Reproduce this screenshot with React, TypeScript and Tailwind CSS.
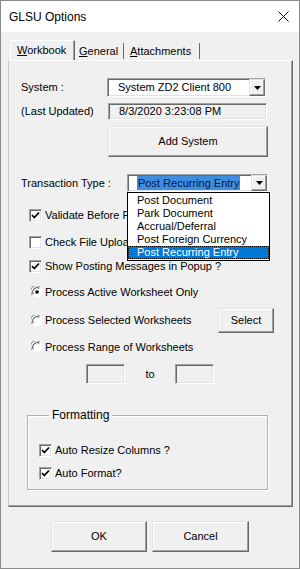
import { ReactNode } from "react";

const font = { fontFamily: '"Liberation Sans", Arial, sans-serif' };

const sunken =
  "border border-t-[#a0a0a0] border-l-[#a0a0a0] border-b-white border-r-white shadow-[inset_1px_1px_0_#696969,inset_-1px_-1px_0_#e3e3e3]";
const raised =
  "border border-t-[#e3e3e3] border-l-[#e3e3e3] border-b-[#696969] border-r-[#696969] shadow-[inset_-1px_-1px_0_#a0a0a0,inset_1px_1px_0_#ffffff]";

function Check({ checked }: { checked?: boolean }) {
  return (
    <span className={`w-[13px] h-[13px] bg-white flex items-center justify-center shrink-0 ${sunken}`}>
      {checked && (
        <svg width="9" height="9" viewBox="0 0 9 9">
          <path d="M1 4 L3.3 6.5 L8 1.5" fill="none" stroke="#000" strokeWidth="1.8" />
        </svg>
      )}
    </span>
  );
}

function Radio({ on }: { on?: boolean }) {
  return (
    <svg width="12" height="12" viewBox="0 0 12 12" className="shrink-0">
      <circle cx="6" cy="6" r="5.5" fill="#ffffff" />
      <path d="M1.2 9 A5.5 5.5 0 0 1 9 1.2" fill="none" stroke="#808080" strokeWidth="1" />
      <path d="M2.2 8.2 A4.4 4.4 0 0 1 8.2 2.2" fill="none" stroke="#404040" strokeWidth="1" />
      <path d="M10.8 3 A5.5 5.5 0 0 1 3 10.8" fill="none" stroke="#f0f0f0" strokeWidth="1" />
      {on && <circle cx="6" cy="6" r="1.8" fill="#000" />}
    </svg>
  );
}

function Arrow() {
  return (
    <span className={`w-[16px] self-stretch bg-[#f0f0f0] flex items-center justify-center ${raised}`}>
      <svg width="7" height="4" viewBox="0 0 7 4">
        <path d="M0 0 H7 L3.5 4 Z" fill="#000" />
      </svg>
    </span>
  );
}

function Btn({ children, className }: { children: ReactNode; className: string }) {
  return (
    <button className={`bg-[#f0f0f0] text-[11px] text-black flex items-center justify-center ${raised} ${className}`}>
      {children}
    </button>
  );
}

export default function App() {
  const items = ["Post Document", "Park Document", "Accrual/Deferral", "Post Foreign Currency", "Post Recurring Entry"];

  return (
    <div style={font} className="w-[300px] h-[569px] border border-[#8c8c8c] flex flex-col overflow-hidden text-black text-[11px]">
      {/* title bar */}
      <div className="h-[31px] bg-white flex items-center justify-between pl-[8px] pr-[10px] shrink-0">
        <span className="text-[12px]">GLSU Options</span>
        <svg width="11" height="11" viewBox="0 0 11 11">
          <path d="M0.5 0.5 L10.5 10.5 M10.5 0.5 L0.5 10.5" stroke="#000" strokeWidth="1" />
        </svg>
      </div>

      <div className="flex-1 bg-[#f0f0f0] flex flex-col">
        {/* tabs */}
        <div className="mt-[8px] ml-[9px] h-[20px] flex items-end">
          <div className="h-[20px] w-[65px] pl-[6px] border-t border-l border-white border-r border-r-[#696969] shadow-[inset_-1px_0_0_#a0a0a0] flex items-center">
            <span><span className="underline">W</span>orkbook</span>
          </div>
          <div className="h-[16px] w-[49px] pl-[4px] border-r border-r-[#696969] flex items-center mb-[1px]">
            <span><span className="underline">G</span>eneral</span>
          </div>
          <div className="h-[16px] w-[76px] pl-[6px] border-r border-r-[#696969] flex items-center mb-[1px]">
            <span><span className="underline">A</span>ttachments</span>
          </div>
        </div>

        {/* tab page */}
        <div className="ml-[7px] w-[285px] h-[447px] border border-t-white border-l-[#c8c8c8] border-b-[#696969] border-r-[#696969] shadow-[inset_-1px_-1px_0_#a0a0a0] flex flex-col pl-[12px]">
          <div className="mt-[17px] h-[19px] flex items-center">
            <span className="w-[86px]">System :</span>
            <div className={`w-[159px] h-[19px] bg-white flex items-stretch ${sunken}`}>
              <span className="flex-1 pl-[10px] flex items-center">System ZD2 Client 800</span>
              <Arrow />
            </div>
          </div>

          <div className="mt-[6px] h-[17px] flex items-center">
            <span className="w-[87px]">(Last Updated)</span>
            <div className={`w-[159px] h-[17px] flex items-center pl-[10px] ${sunken}`}>8/3/2020 3:23:08 PM</div>
          </div>

          <div className="mt-[6px] flex">
            <Btn className="ml-[87px] w-[160px] h-[31px]">Add System</Btn>
          </div>

          <div className="mt-[17px] h-[18px] flex items-center">
            <span className="w-[106px]">Transaction Type :</span>
            <div className="relative">
              <div className={`w-[141px] h-[18px] bg-white flex items-stretch ${sunken}`}>
                <span className="flex-1 pl-[9px] flex items-center">
                  <span className="bg-[#3d8ee0] text-[#0a1a3a] px-[1px] leading-[14px]">Post Recurring Entry</span>
                </span>
                <Arrow />
              </div>
              <div className="absolute left-0 top-[18px] w-[143px] bg-white border border-black z-10 py-[1px]">
                {items.map((t, i) => (
                  <div
                    key={t}
                    className={`h-[13px] leading-[13px] pl-[9px] ${
                      i === 4 ? "bg-[#0078d7] text-white outline outline-1 outline-dotted outline-offset-[-1px] outline-[#000]" : ""
                    }`}
                  >
                    {t}
                  </div>
                ))}
              </div>
            </div>
          </div>

          {[
            ["Validate Before Posting ?", true, "mt-[13px]"],
            ["Check File Upload Limits ?", false, "mt-[7px]"],
            ["Show Posting Messages in Popup ?", true, "mt-[4px]"],
          ].map(([label, c, m]) => (
            <div key={label as string} className={`${m} h-[20px] flex items-center pl-[8px] gap-[3px]`}>
              <Check checked={c as boolean} />
              <span className="whitespace-nowrap">{label as string}</span>
            </div>
          ))}

          <div className="mt-[6px] h-[20px] flex items-center pl-[10px] gap-[2px]">
            <Radio on />
            <span>Process Active Worksheet Only</span>
          </div>
          <div className="mt-[6px] h-[25px] flex items-center pl-[10px] gap-[2px]">
            <Radio />
            <span className="w-[171px]">Process Selected Worksheets</span>
            <Btn className="w-[56px] h-[25px]">Select</Btn>
          </div>
          <div className="mt-[4px] h-[20px] flex items-center pl-[10px] gap-[2px]">
            <Radio />
            <span>Process Range of Worksheets</span>
          </div>

          <div className="mt-[7px] h-[20px] flex items-center pl-[65px]">
            <div className={`w-[39px] h-[20px] ${sunken}`} />
            <span className="w-[50px] text-center">to</span>
            <div className={`w-[39px] h-[20px] ${sunken}`} />
          </div>

          <fieldset className="mt-[22px] ml-[6px] w-[241px] h-[84px] border border-[#b0b0b0] shadow-[inset_1px_1px_0_#fff,1px_1px_0_#fff] pl-[11px]">
            <legend className="ml-[10px] px-[3px] text-[12px]">Formatting</legend>
            <div className="mt-[16px] h-[20px] flex items-center gap-[3px]">
              <Check checked />
              <span>Auto Resize Columns ?</span>
            </div>
            <div className="mt-[3px] h-[20px] flex items-center gap-[3px]">
              <Check checked />
              <span>Auto Format?</span>
            </div>
          </fieldset>
        </div>

        {/* dialog buttons */}
        <div className="mt-[14px] flex gap-[5px] pl-[50px]">
          <Btn className="w-[96px] h-[31px]">OK</Btn>
          <Btn className="w-[97px] h-[31px]">Cancel</Btn>
        </div>
      </div>
    </div>
  );
}
